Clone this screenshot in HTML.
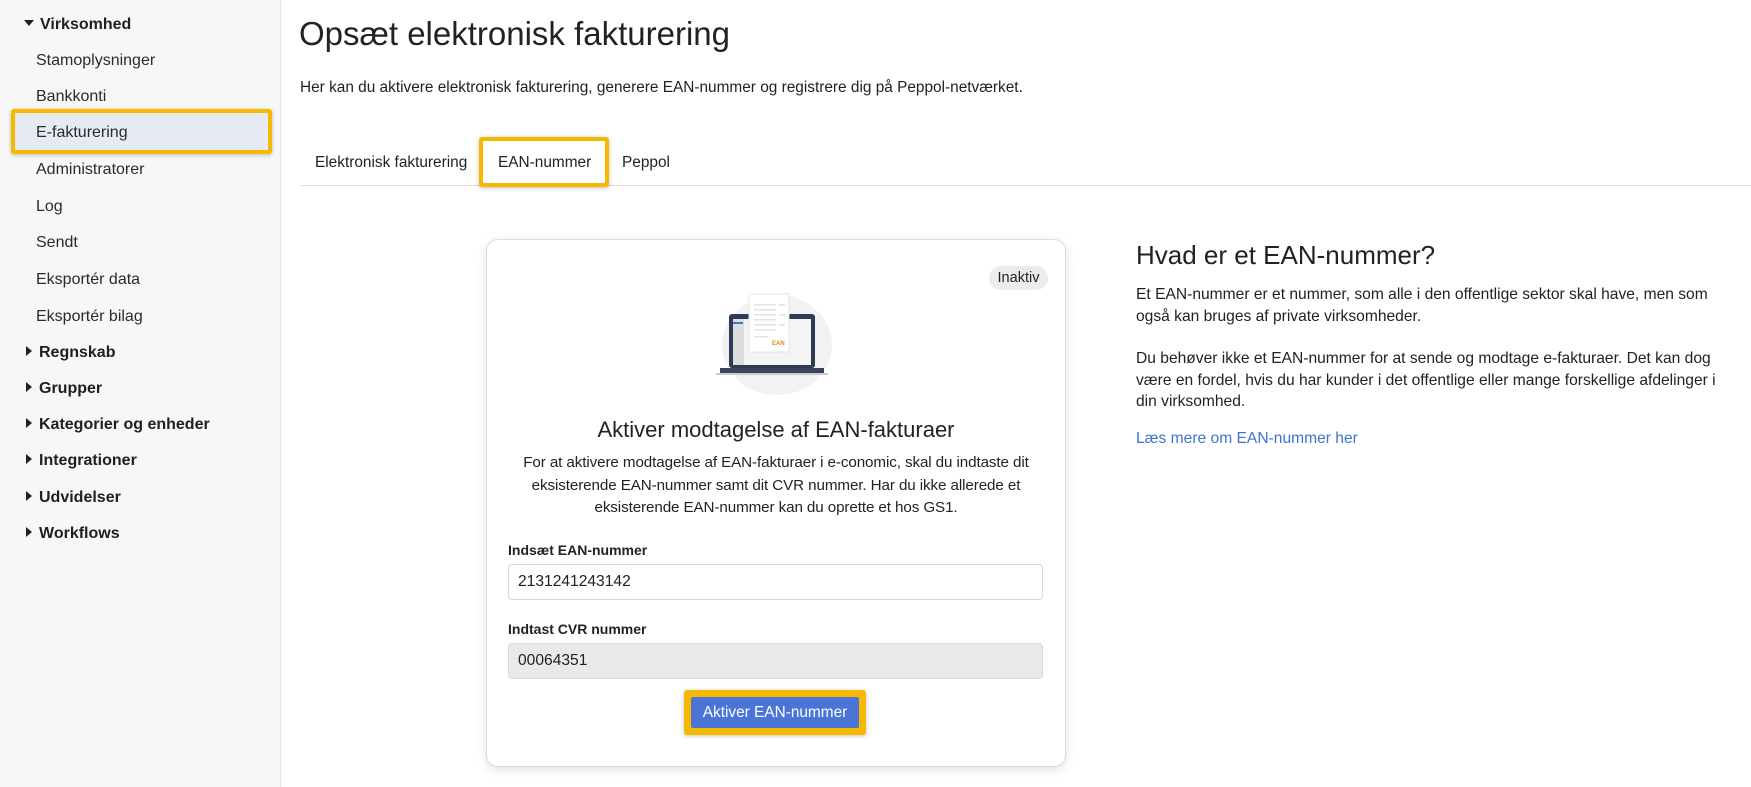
<!DOCTYPE html>
<html><head><meta charset="utf-8"><style>
*{box-sizing:border-box;margin:0;padding:0}
body{width:1751px;height:787px;overflow:hidden;background:#fff;font-family:"Liberation Sans",Arial,sans-serif;color:#222;position:relative}
.abs{position:absolute;white-space:nowrap}
.side{position:absolute;left:0;top:0;width:281px;height:787px;background:#f7f7f7;border-right:1px solid #e3e3e3}
.si{position:absolute;left:36px;font-size:16px;color:#2a2a2a;transform:translateY(-50%)}
.sh{position:absolute;left:24px;font-size:16px;font-weight:bold;color:#1f1f1f;transform:translateY(-50%)}
.tri{display:inline-block;width:0;height:0;margin-right:6px;vertical-align:middle}
.down{border-left:5px solid transparent;border-right:5px solid transparent;border-top:6px solid #222;position:relative;top:-2px}
.right{border-top:5px solid transparent;border-bottom:5px solid transparent;border-left:6px solid #222;margin-left:2px;margin-right:7px;position:relative;top:-2px}
.yb{position:absolute;border:4px solid #f7b800;border-radius:3px;box-shadow:0 1px 4px rgba(0,0,0,.25)}
.p{font-size:15.6px;color:#222;line-height:21.5px}
</style></head><body>
<div class="side">
<div class="sh" style="top:25px"><span class="tri down"></span>Virksomhed</div>
<div class="yb" style="left:11px;top:109px;width:261px;height:45px;background:#e6eaf3"></div>
<div class="si" style="top:61px">Stamoplysninger</div>
<div class="si" style="top:97px">Bankkonti</div>
<div class="si" style="top:133px">E-fakturering</div>
<div class="si" style="top:170px">Administratorer</div>
<div class="si" style="top:207px">Log</div>
<div class="si" style="top:243px">Sendt</div>
<div class="si" style="top:280px">Eksportér data</div>
<div class="si" style="top:317px">Eksportér bilag</div>
<div class="sh" style="top:353px"><span class="tri right"></span>Regnskab</div>
<div class="sh" style="top:389px"><span class="tri right"></span>Grupper</div>
<div class="sh" style="top:425px"><span class="tri right"></span>Kategorier og enheder</div>
<div class="sh" style="top:461px"><span class="tri right"></span>Integrationer</div>
<div class="sh" style="top:498px"><span class="tri right"></span>Udvidelser</div>
<div class="sh" style="top:534px"><span class="tri right"></span>Workflows</div>
</div>

<div class="abs" style="left:299px;top:15px;font-size:33px;color:#222">Opsæt elektronisk fakturering</div>
<div class="abs" style="left:300px;top:79px;font-size:15.4px">Her kan du aktivere elektronisk fakturering, generere EAN-nummer og registrere dig på Peppol-netværket.</div>

<div class="abs" style="left:300px;top:185px;width:1451px;height:1px;background:#dcdcdc"></div>
<div class="abs" style="left:315px;top:154px;font-size:15.4px">Elektronisk fakturering</div>
<div class="yb" style="left:479px;top:137px;width:130px;height:50px;background:#fff"></div>
<div class="abs" style="left:498px;top:154px;font-size:15.4px">EAN-nummer</div>
<div class="abs" style="left:622px;top:154px;font-size:15.4px">Peppol</div>

<div class="abs" style="left:486px;top:239px;width:580px;height:528px;border:1px solid #dcdcdc;border-radius:12px;box-shadow:0 3px 10px rgba(0,0,0,.12);background:#fff"></div>
<div class="abs" style="left:989px;top:266px;width:59px;height:24px;background:#ececec;border-radius:12px;font-size:14.5px;line-height:24px;text-align:center">Inaktiv</div>

<svg class="abs" style="left:715px;top:290px" width="124" height="106" viewBox="0 0 124 106">
<ellipse cx="62" cy="55" rx="55" ry="50" fill="#f2f2f2"/>
<rect x="14" y="24" width="86" height="54" rx="3" fill="#2f3a55"/>
<rect x="18" y="29" width="78" height="46" fill="#f4f4f4"/>
<rect x="18" y="29" width="11" height="46" fill="#ddd"/>
<rect x="18" y="32" width="10" height="2" fill="#4a72d4"/>
<rect x="5" y="78" width="104" height="5" fill="#3a4460"/>
<rect x="1" y="83" width="112" height="2" fill="#ccc"/>
<rect x="34" y="4" width="40" height="58" fill="#fff" stroke="#e4e4e4"/>
<g fill="#e2e2e2"><rect x="39" y="14" width="22" height="1.5"/><rect x="39" y="19" width="22" height="1.5"/><rect x="39" y="24" width="22" height="1.5"/><rect x="39" y="29" width="22" height="1.5"/><rect x="39" y="34" width="22" height="1.5"/><rect x="39" y="39" width="22" height="1.5"/><rect x="39" y="46" width="14" height="1.5"/><rect x="64" y="14" width="6" height="1.5"/><rect x="64" y="24" width="6" height="1.5"/><rect x="64" y="34" width="6" height="1.5"/></g>
<text x="57" y="55" font-size="6" fill="#e08a1e" font-family="Liberation Sans" font-weight="bold">EAN</text>
</svg>

<div class="abs" style="left:486px;width:580px;text-align:center;top:417px;font-size:22px">Aktiver modtagelse af EAN-fakturaer</div>
<div class="abs" style="left:486px;width:580px;text-align:center;top:452px;white-space:normal;padding:0 8px;line-height:22.5px;font-size:15.2px;letter-spacing:-0.1px">For at aktivere modtagelse af EAN-fakturaer i e-conomic, skal du indtaste dit<br>eksisterende EAN-nummer samt dit CVR nummer. Har du ikke allerede et<br>eksisterende EAN-nummer kan du oprette et hos GS1.</div>

<div class="abs" style="left:508px;top:542px;font-size:14px;font-weight:bold">Indsæt EAN-nummer</div>
<div class="abs" style="left:508px;top:564px;width:535px;height:36px;border:1px solid #d8d8d8;border-radius:4px;font-size:15.6px;line-height:34px;padding-left:9px">2131241243142</div>
<div class="abs" style="left:508px;top:621px;font-size:14px;font-weight:bold">Indtast CVR nummer</div>
<div class="abs" style="left:508px;top:643px;width:535px;height:36px;border:1px solid #dadada;background:#e9e9e9;border-radius:4px;font-size:15.6px;line-height:34px;padding-left:9px">00064351</div>

<div class="yb" style="left:684px;top:690px;width:182px;height:45px;background:#f7b800"></div>
<div class="abs" style="left:691px;top:697px;width:168px;height:31px;background:#4a74d6;border-radius:2px;color:#fff;font-size:15.4px;line-height:31px;text-align:center">Aktiver EAN-nummer</div>

<div class="abs" style="left:1136px;top:240px;font-size:26px">Hvad er et EAN-nummer?</div>
<div class="abs p" style="left:1136px;top:284px;width:590px;white-space:normal">Et EAN-nummer er et nummer, som alle i den offentlige sektor skal have, men som<br>også kan bruges af private virksomheder.</div>
<div class="abs p" style="left:1136px;top:348px;width:600px;white-space:normal">Du behøver ikke et EAN-nummer for at sende og modtage e-fakturaer. Det kan dog<br>være en fordel, hvis du har kunder i det offentlige eller mange forskellige afdelinger i<br>din virksomhed.</div>
<div class="abs" style="left:1136px;top:430px;font-size:15.6px;color:#3b74d6">Læs mere om EAN-nummer her</div>
</body></html>
